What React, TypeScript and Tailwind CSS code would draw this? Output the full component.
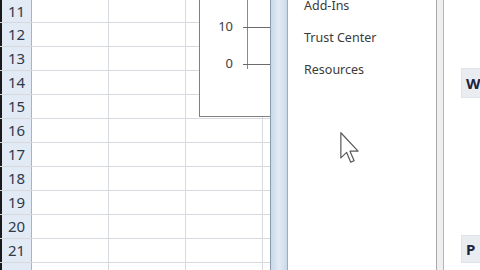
const rows = [11, 12, 13, 14, 15, 16, 17, 18, 19, 20, 21, 22]

function Sheet() {
  return (
    <div className="relative h-full w-[270px] shrink-0 overflow-hidden bg-white">
      <div className="flex flex-col">
        {rows.map((r, i) => (
          <div
            key={r}
            className={`flex border-b border-[#d6d9de] ${i === 0 ? 'h-[23px]' : 'h-[24px]'}`}
          >
            <div className="flex w-[32px] shrink-0 items-center justify-center border-l-[2px] border-l-[#1a1a1a] border-r border-r-[#9eb6ce] bg-[#e2eaf5] text-[15px] text-[#2e3a4a]">
              {r}
            </div>
            <div className="w-[77px] shrink-0 border-r border-[#d6d9de]" />
            <div className="w-[77px] shrink-0 border-r border-[#d6d9de]" />
            <div className="w-[77px] shrink-0 border-r border-[#d6d9de]" />
            <div className="flex-1" />
          </div>
        ))}
      </div>

      {/* chart object sitting over the cells */}
      <div className="absolute left-[199px] top-[-2px] h-[119px] w-[80px] border border-[#7f7f7f] bg-white">
        <div className="absolute left-[47px] top-0 h-[70px] w-px bg-[#8a8a8a]" />
        <div className="absolute left-[43px] top-[28px] h-px w-[40px] bg-[#6a6a6a]" />
        <div className="absolute left-[43px] top-[65px] h-px w-[40px] bg-[#6a6a6a]" />
        <div className="absolute left-[0px] top-[19px] w-[33px] text-right text-[13px] leading-4 text-[#404040]">10</div>
        <div className="absolute left-[0px] top-[56px] w-[33px] text-right text-[13px] leading-4 text-[#404040]">0</div>
      </div>
    </div>
  )
}

function Cursor() {
  return (
    <svg
      className="absolute left-[340px] top-[132px]"
      width="20"
      height="32"
      viewBox="0 0 13 21"
    >
      <path
        d="M0.5 0.5 L0.5 17 L4.3 13.4 L7 19.8 L9.2 18.9 L6.5 12.6 L11.8 12.6 Z"
        fill="#ffffff"
        stroke="#5a5a5a"
        strokeWidth="0.8"
        strokeLinejoin="round"
      />
    </svg>
  )
}

function OptionsDialog() {
  const items = ['Add-Ins', 'Trust Center', 'Resources']
  return (
    <div className="flex h-full flex-1">
      <div className="w-[17px] shrink-0 border-l border-[#8c9cae] bg-gradient-to-r from-[#c9d8ea] via-[#e3ecf6] to-[#cbd9e9]" />
      <div className="w-[150px] shrink-0 border-x border-[#a9a9a9] bg-white">
        <div className="-mt-[2px] flex flex-col gap-[16px] pl-[16px]" style={{ fontFamily: '"Noto Sans", "Open Sans", sans-serif' }}>
          {items.map((t) => (
            <div key={t} className="h-4 text-[12.5px] leading-4 text-[#3b3b3b]">
              {t}
            </div>
          ))}
        </div>
      </div>
      <div className="w-[7px] shrink-0 border-r border-[#b4b4b4] bg-[#efefef]" />
      <div className="flex flex-1 flex-col bg-white pl-[17px]">
        <div className="mt-[68px] flex h-[30px] items-center border border-[#dfe4ea] bg-[#e9edf2] pl-[4px] text-[15px] font-bold text-[#1c2440]">
          W
        </div>
        <div className="mt-[137px] flex h-[28px] items-center border border-[#dfe4ea] bg-[#e9edf2] pl-[4px] text-[15px] font-bold text-[#1c2440]">
          P
        </div>
      </div>
    </div>
  )
}

export default function App() {
  return (
    <div
      className="relative flex h-[270px] w-[480px] overflow-hidden bg-white"
      style={{ fontFamily: '"Noto Sans", "DejaVu Sans", sans-serif' }}
    >
      <Sheet />
      <OptionsDialog />
      <Cursor />
    </div>
  )
}
